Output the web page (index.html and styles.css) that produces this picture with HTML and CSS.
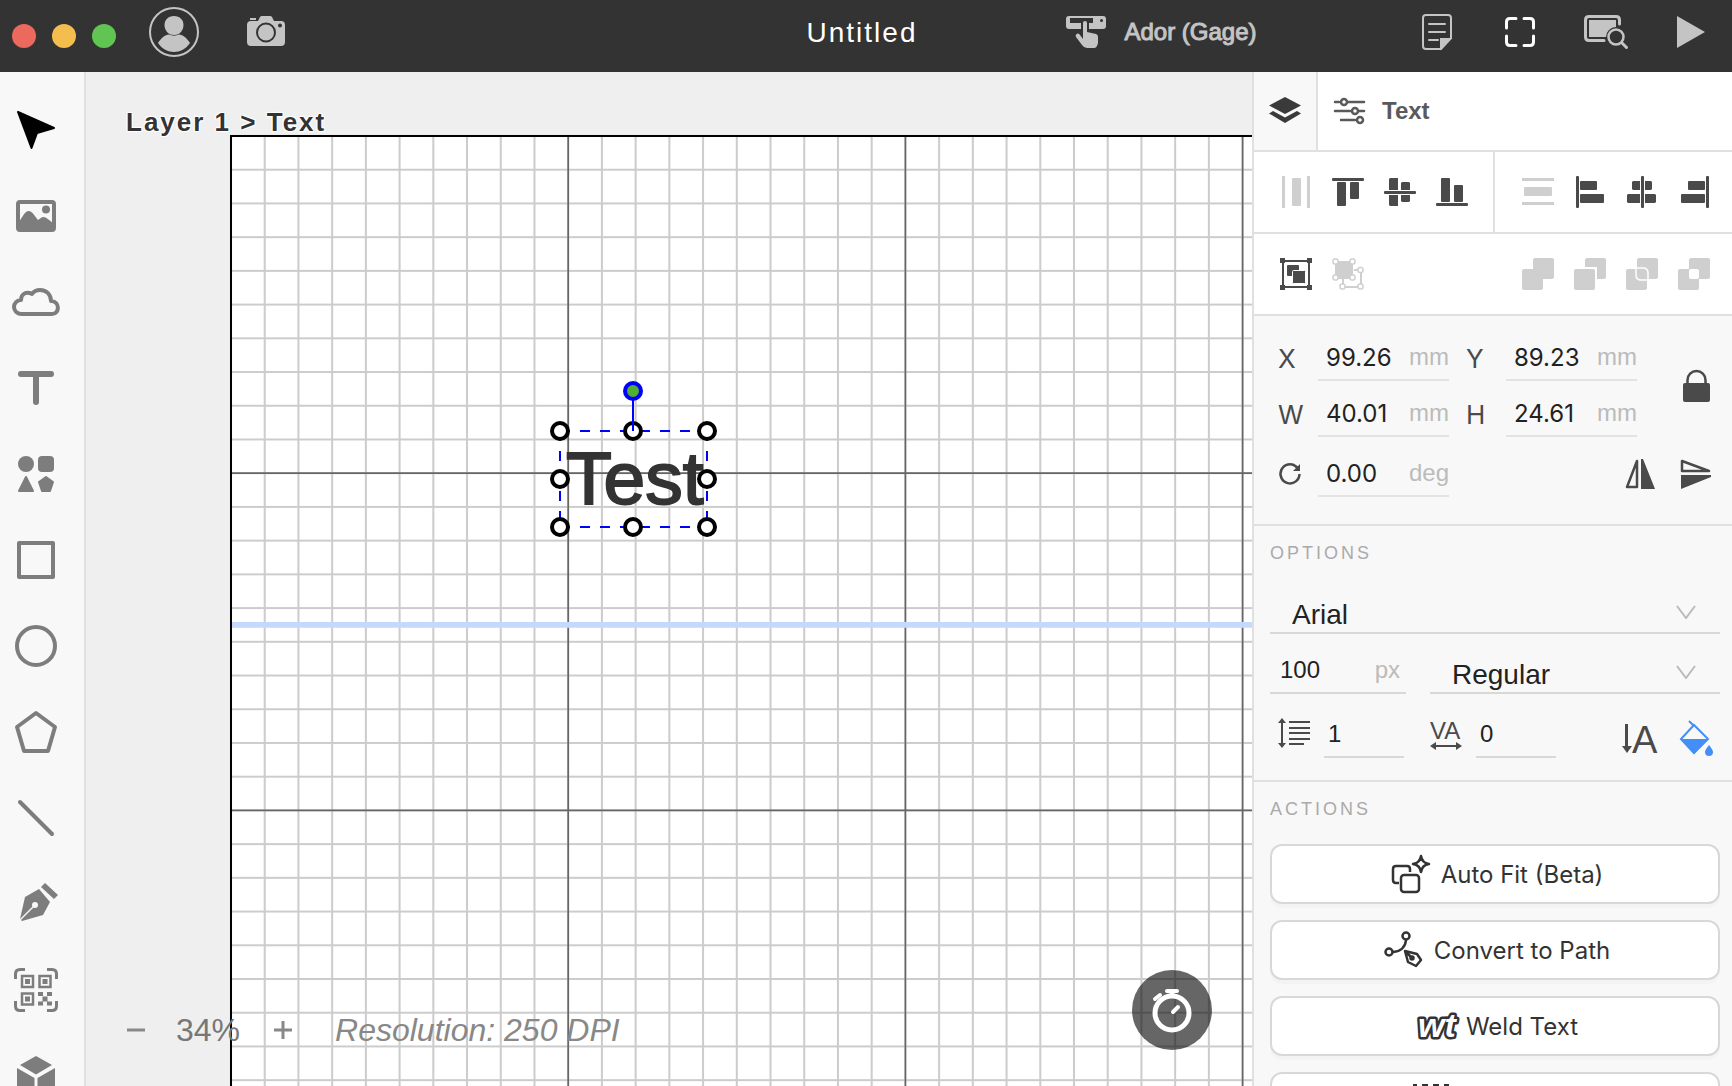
FILE: index.html
```html
<!DOCTYPE html>
<html lang="en">
<head>
    <meta charset="UTF-8">
    <meta name="viewport" content="width=device-width, initial-scale=1.0">
    <title>Untitled</title>
    <link rel="stylesheet" href="styles.css">
</head>
<body>
    <header class="topbar">
        <div class="topbar-left">
            <div class="window-buttons">
                <button class="dot red" aria-label="Close"></button>
                <button class="dot yellow" aria-label="Minimize"></button>
                <button class="dot green" aria-label="Zoom"></button>
            </div>
            <button class="account" aria-label="Account">
                <svg width="50" height="50" viewBox="0 0 50 50" fill="#c4c4c4">
                    <circle cx="25" cy="25" r="24" fill="none" stroke="#c4c4c4" stroke-width="2"/>
                    <path d="M25 9c6 0 9.500 4 9.500 9S31 28 25 28s-9.500-5-9.500-10S19 9 25 9z"/>
                    <path d="M9 36c3-5 7-8 11-8.500 3 1.500 7 1.500 10 0 4 .5 8 3.500 11 8.500-4 6-10 9-16 9S13 42 9 36z"/>
                </svg>
            </button>
            <button aria-label="Camera">
                <svg width="40" height="32" viewBox="0 0 40 32">
                    <path fill="#c4c4c4" d="M4 2h6v2H4zM1 9q0-4 4-4h7l2-4q.6-1 2-1h8q1.400 0 2 1l2 4h7q4 0 4 4v17q0 4-4 4H5q-4 0-4-4z"/>
                    <circle cx="20" cy="16.500" r="9" fill="none" stroke="#333" stroke-width="2"/>
                    <circle cx="34" cy="9.500" r="2" fill="#333"/>
                </svg>
            </button>
        </div>
        <h1 class="title">Untitled</h1>
        <div class="topbar-right">
            <button class="machine">
                <svg width="42" height="34" viewBox="0 0 42 34">
                    <path fill="#c4c4c4" d="M4 1h34q3 0 3 3v7q0 3-3 3H4q-3 0-3-3V4q0-3 3-3z"/>
                    <path fill="#333" d="M5 3h23v5H5zM16 7h8v8h-8z"/>
                    <circle cx="36.500" cy="5.500" r="1.500" fill="#333"/>
                    <path fill="#c4c4c4" d="M18 8q0-2 2-2t2 2v9l9 2q2 .6 2 3v6q-1 5-4 5h-7q-3 0-5-3l-6-8q-1-2 .6-3t3 .6L18 24z"/>
                </svg>
                <span>Ador (Gage)</span>
            </button>
            <nav class="topbar-tools">
                <button aria-label="Notes">
                    <svg width="30" height="36" viewBox="0 0 30 36" fill="none" stroke="#c4c4c4" stroke-width="2" stroke-linecap="round">
                        <path d="M4 1h22q3 0 3 3v20L19 35H4q-3 0-3-3V4q0-3 3-3zM7 10h16M7 18h16M7 26h9"/>
                        <path fill="#c4c4c4" d="M19 34v-9h9z"/>
                    </svg>
                </button>
                <button aria-label="Frame">
                    <svg width="30" height="30" viewBox="0 0 30 30" fill="none" stroke="#fff" stroke-width="3" stroke-linecap="round">
                        <path d="M1.500 11V5q0-3.500 3.500-3.500h6M19 1.500h6q3.500 0 3.500 3.500v6M28.500 19v6q0 3.500-3.500 3.500h-6M11 28.500H5q-3.500 0-3.500-3.500v-6"/>
                    </svg>
                </button>
                <button aria-label="Preview">
                    <svg width="44" height="34" viewBox="0 0 44 34" fill="none">
                        <path fill="#c4c4c4" d="M5 5h27v9q-9 0-9 8H5z"/>
                        <path stroke="#c4c4c4" stroke-width="3" stroke-linecap="round" d="M35.500 9V5q0-3.500-3.500-3.500H5Q1.500 1.500 1.500 5v17q0 3.500 3.500 3.500h15"/>
                        <circle cx="32" cy="22" r="10" fill="#333"/>
                        <circle cx="32" cy="22" r="7.500" stroke="#c4c4c4" stroke-width="2.500"/>
                        <path stroke="#c4c4c4" stroke-width="3" stroke-linecap="round" d="M38 28l4.500 4.500"/>
                    </svg>
                </button>
                <button aria-label="Start">
                    <svg width="28" height="32" viewBox="0 0 28 32"><path fill="#c4c4c4" d="M0 0l28 16L0 32z"/></svg>
                </button>
            </nav>
        </div>
    </header>

    <main class="editor">
        <nav class="toolbar">
            <button aria-label="Select">
                <svg viewBox="0 0 48 48"><path fill="#000" stroke="#000" stroke-width="2" stroke-linejoin="round" d="M6 6l36 16-17 5-5.500 15z"/></svg>
            </button>
            <button aria-label="Image">
                <svg viewBox="0 0 48 48">
                    <rect class="line" x="6" y="10" width="36" height="28" rx="2"/>
                    <path d="M7 30c4-6 6-11 9.500-11S23 24 26 28c2-1 3-3 5.500-3S37 28 41 31v7H7z"/>
                    <circle cx="34" cy="17.500" r="4"/>
                </svg>
            </button>
            <button aria-label="My cloud">
                <svg viewBox="0 0 48 48"><path class="line" d="M9 36a7 7 0 0 1 0-14c0-6 5-9 11-6 2-3 5-4 8-4 7 0 11 5 11 11 9 0 9 13 1 13z"/></svg>
            </button>
            <button aria-label="Text">
                <svg viewBox="0 0 48 48"><path class="line thick" d="M9 10h30M24 10v28"/></svg>
            </button>
            <button aria-label="Shapes">
                <svg viewBox="0 0 48 48">
                    <circle cx="14" cy="14" r="8"/>
                    <rect x="26" y="6" width="16" height="16" rx="4"/>
                    <path stroke="#7d7d7d" stroke-width="2" stroke-linejoin="round" d="M14 27l7 14H7zM34 27l7 5-3 9h-8l-3-9z"/>
                </svg>
            </button>
            <button aria-label="Rectangle">
                <svg viewBox="0 0 48 48"><rect class="line" x="7" y="7" width="34" height="34"/></svg>
            </button>
            <button aria-label="Ellipse">
                <svg viewBox="0 0 48 48"><circle class="line" cx="24" cy="24" r="19"/></svg>
            </button>
            <button aria-label="Polygon">
                <svg viewBox="0 0 48 48"><path class="line" d="M24 5l19 14-7 24H12L5 19z"/></svg>
            </button>
            <button aria-label="Line">
                <svg viewBox="0 0 48 48"><path class="line" d="M8 8l32 32"/></svg>
            </button>
            <button aria-label="Pen">
                <svg viewBox="0 0 48 48">
                    <path d="M33 3l13 12-4 4L29 7zM27 9l11 13-7 13-21 6-2-2 5-22z"/>
                    <circle cx="23" cy="25" r="3" fill="#f8f8f8"/>
                    <path stroke="#f8f8f8" stroke-width="1.500" d="M8 40l15-15"/>
                </svg>
            </button>
            <button aria-label="Code">
                <svg viewBox="0 0 48 48">
                    <path fill="none" stroke="#7d7d7d" stroke-width="3" d="M3.500 13V8q0-4.500 4.500-4.500h5M35 3.500h5q4.500 0 4.500 4.500v5M44.500 35v5q0 4.500-4.500 4.500h-5M13 44.500H8Q3.500 44.500 3.500 40v-5"/>
                    <path fill="none" stroke="#7d7d7d" stroke-width="2.500" d="M10 10h11v11H10zM27.500 10h11v11h-11zM10 27.500h11v11H10z"/>
                    <path d="M13 13h5v5h-5zM30.500 13h5v5h-5zM13 30.500h5v5h-5zM26 26h5v4h-5zM35 26h5v4h-5zM30.500 30.500h5v5h-5zM26 35.500h5v4h-5zM35 35.500h5v4h-5z"/>
                </svg>
            </button>
            <button aria-label="3D">
                <svg viewBox="0 0 48 48"><path d="M24 4l16 9-16 9.500L8 13zM5 16l17.500 10v19L5 35zM43 16L25.500 26v19L43 35z"/></svg>
            </button>
        </nav>

        <section class="workspace">
            <svg class="work-area" width="100%" height="100%">
                <defs>
                    <pattern id="minorGrid" width="100" height="100" patternUnits="userSpaceOnUse">
                        <path d="M0 0V100M100 0V100M0 0H100M0 100H100" fill="none" stroke="#000" stroke-opacity=".2" stroke-width="6"/>
                    </pattern>
                </defs>
                <!-- 1 unit = 0.1 mm -->
                <g transform="translate(145 64) scale(.3372)">
                    <rect width="4300" height="3200" fill="#fff"/>
                    <rect width="4300" height="3200" fill="url(#minorGrid)"/>
                    <path d="M1000 0V3200M2000 0V3200M3000 0V3200M0 1000H4300M0 2000H4300" fill="none" stroke="#000" stroke-opacity=".5" stroke-width="5"/>
                    <rect width="4300" height="3200" fill="none" stroke="#000" stroke-width="6"/>
                    <path d="M3 1450H4300" stroke="#c4d9fb" stroke-width="17"/>
                </g>
                <text class="canvas-text" x="480" y="432">Test</text>
                <g class="selection">
                    <path class="dashed" d="M474 359H621M474 455H621M474 359V455M621 359V455"/>
                    <g class="grips">
                        <circle cx="474" cy="359" r="8"/>
                        <circle cx="547" cy="359" r="8"/>
                        <circle cx="621" cy="359" r="8"/>
                        <circle cx="474" cy="407" r="8"/>
                        <circle cx="621" cy="407" r="8"/>
                        <circle cx="474" cy="455" r="8"/>
                        <circle cx="547" cy="455" r="8"/>
                        <circle cx="621" cy="455" r="8"/>
                    </g>
                    <path d="M547 327V359"/>
                    <circle class="rotate-grip" cx="547" cy="319" r="8"/>
                </g>
            </svg>

            <div class="path-label">Layer 1 &gt; Text</div>

            <div class="zoom-bar">
                <button aria-label="Zoom out"><svg width="20" height="20" viewBox="0 0 20 20"><path d="M1 10h18"/></svg></button>
                <span class="zoom-ratio">34%</span>
                <button aria-label="Zoom in"><svg width="20" height="20" viewBox="0 0 20 20"><path d="M1 10h18M10 1v18"/></svg></button>
                <span class="resolution">Resolution: 250 DPI</span>
            </div>

            <button class="timer" aria-label="Estimate time">
                <svg width="44" height="48" viewBox="0 0 44 48" fill="none" stroke="#fff" stroke-width="5">
                    <circle cx="22" cy="27" r="17"/>
                    <path stroke-width="4" stroke-linecap="round" d="M17 5h10M5 13l5-4M23 26l5-5"/>
                    <path d="M22 6v5"/>
                </svg>
            </button>
        </section>

        <aside class="panel">
            <div class="tabs">
                <button class="tab layers" aria-label="Layers">
                    <svg width="34" height="28" viewBox="0 0 34 28" fill="#3a3a3a">
                        <path d="M17 0l16 8.500L17 17 1 8.500z"/>
                        <path d="M5 14l12 6.500L29 14l4 2.500L17 26 1 16.500z"/>
                    </svg>
                </button>
                <button class="tab active">
                    <svg width="32" height="26" viewBox="0 0 32 26" fill="none" stroke="#5a5a5a" stroke-width="2.500" stroke-linecap="round">
                        <path d="M1 4h4M14 4h16M1 13h15M25 13h5M7 22h14"/>
                        <circle cx="10" cy="4" r="3"/>
                        <circle cx="21" cy="13" r="3"/>
                        <circle cx="26" cy="22" r="3"/>
                    </svg>
                    Text
                </button>
            </div>

            <div class="align-row">
                <div class="icon-group start">
                    <button disabled aria-label="Distribute horizontally"><svg viewBox="0 0 32 32"><path d="M2 0h3v32H2zM27 0h3v32h-3z"/><rect x="12" y="2" width="9" height="28" rx="1"/></svg></button>
                    <button aria-label="Align top"><svg viewBox="0 0 32 32"><rect y="2" width="32" height="3" rx="1"/><rect x="5" y="6" width="9" height="24" rx="1"/><rect x="18" y="6" width="9" height="17" rx="1"/></svg></button>
                    <button aria-label="Align middle"><svg viewBox="0 0 32 32"><rect y="15" width="32" height="3" rx="1"/><path d="M6 2h8v12H5V3zM5 19h9v11H6l-1-1zM17 7l1-1h7l1 1v7h-9zM17 19h9v6l-1 1h-7l-1-1z"/></svg></button>
                    <button aria-label="Align bottom"><svg viewBox="0 0 32 32"><rect y="27" width="32" height="3" rx="1"/><rect x="5" y="2" width="9" height="24" rx="1"/><rect x="18" y="9" width="9" height="17" rx="1"/></svg></button>
                </div>
                <div class="icon-group end">
                    <button disabled aria-label="Distribute vertically"><svg viewBox="0 0 32 32"><path d="M0 2h32v3H0zM0 26h32v3H0z"/><rect x="2" y="11" width="28" height="9" rx="1"/></svg></button>
                    <button aria-label="Align left"><svg viewBox="0 0 32 32"><rect x="2" width="3" height="32" rx="1"/><rect x="6" y="5" width="17" height="9" rx="1"/><rect x="6" y="18" width="24" height="9" rx="1"/></svg></button>
                    <button aria-label="Align center"><svg viewBox="0 0 32 32"><rect x="15" width="3" height="32" rx="1"/><path d="M7 5h7v9H7l-1-1V6zM19 5h6l1 1v7l-1 1h-6zM2 18h12v9H2l-1-1v-7zM19 18h10l1 1v7l-1 1H19z"/></svg></button>
                    <button aria-label="Align right"><svg viewBox="0 0 32 32"><rect x="28" width="3" height="32" rx="1"/><rect x="10" y="5" width="17" height="9" rx="1"/><rect x="3" y="18" width="24" height="9" rx="1"/></svg></button>
                </div>
            </div>

            <div class="align-row group-row">
                <div class="icon-group start">
                    <button aria-label="Group">
                        <svg viewBox="0 0 32 32">
                            <rect x="3" y="3" width="26" height="26" fill="none" stroke="#4a4a4a" stroke-width="2"/>
                            <path d="M0 0h5v5H0zM27 0h5v5h-5zM0 27h5v5H0zM27 27h5v5h-5z"/>
                            <rect x="7" y="7" width="12" height="11" rx="1"/>
                            <rect x="12.500" y="12.500" width="13" height="13" rx="1" stroke="#fff"/>
                        </svg>
                    </button>
                    <button disabled aria-label="Ungroup">
                        <svg viewBox="0 0 32 32">
                            <path d="M3 3h18v18H3z"/>
                            <path fill="none" stroke="#cfcfcf" stroke-width="2" d="M22 12h7v17H11v-9"/>
                            <g fill="#fff" stroke="#cfcfcf" stroke-width="1.500">
                                <rect x="1" y="1" width="5" height="5" rx="2"/>
                                <rect x="18" y="1" width="5" height="5" rx="2"/>
                                <rect x="1" y="17" width="5" height="5" rx="2"/>
                                <rect x="18" y="17" width="5" height="5" rx="2"/>
                                <rect x="26" y="9.500" width="5" height="5" rx="2"/>
                                <rect x="26" y="26" width="5" height="5" rx="2"/>
                                <rect x="8" y="26" width="5" height="5" rx="2"/>
                            </g>
                        </svg>
                    </button>
                </div>
                <div class="icon-group end">
                    <button disabled aria-label="Union"><svg viewBox="0 0 32 32"><rect x="11" width="21" height="21" rx="2"/><rect y="11" width="21" height="21" rx="2"/></svg></button>
                    <button disabled aria-label="Subtract"><svg viewBox="0 0 32 32"><rect x="11" width="21" height="21" rx="2"/><path fill="#fff" d="M0 9h23v23H0z"/><rect y="11" width="21" height="21" rx="2"/></svg></button>
                    <button disabled aria-label="Intersect"><svg viewBox="0 0 32 32"><rect x="11" width="21" height="21" rx="2"/><rect y="11" width="21" height="21" rx="2"/><path fill="none" stroke="#fff" stroke-width="1.500" d="M10 10h7q5 0 5 5v7h-7q-5 0-5-5z"/></svg></button>
                    <button disabled aria-label="Exclude"><svg viewBox="0 0 32 32"><rect x="11" width="21" height="21" rx="2"/><rect y="11" width="21" height="21" rx="2"/><rect x="11" y="11" width="10" height="10" rx="2" fill="#fff"/></svg></button>
                </div>
            </div>

            <div class="section dimensions">
                <label for="x">X</label>
                <div class="field"><input type="text" id="x" value="99.26"><span class="unit">mm</span></div>
                <label class="second" for="y">Y</label>
                <div class="field"><input type="text" id="y" value="89.23"><span class="unit">mm</span></div>
                <button class="lock" aria-label="Lock ratio">
                    <svg width="32" height="34" viewBox="0 0 32 34">
                        <rect x="3" y="14" width="27" height="19" rx="2" fill="#4a4a4a"/>
                        <path fill="none" stroke="#4a4a4a" stroke-width="2.500" d="M7.500 15v-4a9 9 0 0 1 18 0v4"/>
                    </svg>
                </button>
                <label for="w">W</label>
                <div class="field"><input type="text" id="w" value="40.01"><span class="unit">mm</span></div>
                <label class="second" for="h">H</label>
                <div class="field"><input type="text" id="h" value="24.61"><span class="unit">mm</span></div>
                <label for="angle" aria-label="Rotation">
                    <svg width="24" height="24" viewBox="0 0 24 24" fill="none" stroke="#4a4a4a" stroke-width="2.500">
                        <path d="M21.500 12a9.500 9.500 0 1 1-3.500-7.500l3 3"/>
                        <path fill="#4a4a4a" stroke="none" d="M22 2v7h-7z"/>
                    </svg>
                </label>
                <div class="field"><input type="text" id="angle" value="0.00"><span class="unit">deg</span></div>
                <div class="flips">
                    <button aria-label="Flip horizontal">
                        <svg width="32" height="32" viewBox="0 0 32 32"><path fill="none" stroke="#4a4a4a" stroke-width="2.500" stroke-linejoin="round" d="M13 3v26H3z"/><path fill="#4a4a4a" d="M17 1h2l12 30H17z"/></svg>
                    </button>
                    <button aria-label="Flip vertical">
                        <svg width="32" height="32" viewBox="0 0 32 32"><path fill="none" stroke="#4a4a4a" stroke-width="2.500" stroke-linejoin="round" d="M2 3v10h27z"/><path fill="#4a4a4a" d="M1 17h30v2L1 31z"/></svg>
                    </button>
                </div>
            </div>

            <div class="section">
                <h2>Options</h2>
                <div class="option-rows">
                    <select aria-label="Font family">
                        <option>Arial</option>
                    </select>
                    <div class="option-row">
                        <div class="field size"><input type="text" aria-label="Font size" value="100"><span class="unit">px</span></div>
                        <select aria-label="Font style">
                            <option>Regular</option>
                        </select>
                    </div>
                    <div class="option-row spacing">
                        <label for="lineSpacing" aria-label="Line spacing">
                            <svg width="32" height="32" viewBox="0 0 32 32" fill="none" stroke="#4a4a4a" stroke-width="2">
                                <path d="M4 5v22M11 5h21M11 11h21M11 16h21M11 22h21M11 27h15"/>
                                <path fill="#4a4a4a" stroke="none" d="M4 1l4 5H0zM4 31l4-5H0z"/>
                            </svg>
                        </label>
                        <div class="field"><input type="text" id="lineSpacing" value="1"></div>
                        <label class="tracking" for="letterSpacing" aria-label="Letter spacing">
                            <svg width="32" height="40" viewBox="0 0 32 40">
                                <text x="0" y="26" font-size="24" fill="#4a4a4a">VA</text>
                                <path fill="#4a4a4a" d="M0 33l6-4v3h20v-3l6 4-6 4v-3H6v3z"/>
                            </svg>
                        </label>
                        <div class="field"><input type="text" id="letterSpacing" value="0"></div>
                        <div class="text-tools">
                            <button aria-label="Vertical text">
                                <svg width="38" height="50" viewBox="0 0 38 50">
                                    <path fill="#4a4a4a" d="M4 11h3v22h4l-5 7-5-7h3z"/>
                                    <text x="11" y="40" font-size="38" fill="#4a4a4a">A</text>
                                </svg>
                            </button>
                            <button aria-label="Fill">
                                <svg width="34" height="36" viewBox="0 0 34 36">
                                    <path fill="none" stroke="#448ff7" stroke-width="2" d="M10 1l5 5M15 5l14 14-14 14L2 19z"/>
                                    <path fill="#448ff7" d="M1 19h28L15 34zM30 25q4 5 4 7 0 4-4 4t-4-4q0-2 4-7z"/>
                                </svg>
                            </button>
                        </div>
                    </div>
                </div>
            </div>

            <div class="section actions">
                <h2>Actions</h2>
                <div class="action-list">
                    <button class="action">
                        <svg width="40" height="40" viewBox="0 0 40 40" fill="none" stroke="#333" stroke-width="2.500" stroke-linejoin="round">
                            <path d="M8 29H5q-3 0-3-3V15q0-3 3-3h11q3 0 3 3v3"/>
                            <rect x="10" y="21" width="18" height="17" rx="3"/>
                            <path d="M30 2q1 7 8 8-7 1-8 8-1-7-8-8 7-1 8-8z"/>
                        </svg>
                        Auto Fit (Beta)
                    </button>
                    <button class="action">
                        <svg width="40" height="40" viewBox="0 0 40 40" fill="none" stroke="#333" stroke-width="2.500" stroke-linejoin="round">
                            <circle cx="22" cy="6" r="3.500"/>
                            <circle cx="5" cy="22" r="3.500"/>
                            <path d="M22 10q-1 11-13 12M21 21l3 11 8 4 5-6-4-6zM21 21l7 7"/>
                            <circle cx="28" cy="28" r="1.500" fill="#333"/>
                        </svg>
                        Convert to Path
                    </button>
                    <button class="action">
                        <svg class="weld" width="40" height="40" viewBox="0 0 40 40">
                            <text x="2" y="31">wt</text>
                        </svg>
                        Weld Text
                    </button>
                    <button class="action" aria-label="More">
                        <svg width="170" height="40" viewBox="0 0 170 40" fill="none" stroke="#333" stroke-width="2">
                            <path stroke-dasharray="6 5" d="M2 6V3h34v34H2V6"/>
                        </svg>
                    </button>
                </div>
            </div>
        </aside>
    </main>
</body>
</html>
```
FILE: styles.css
```css
* {
    box-sizing: border-box;
}

body {
    margin: 0;
    height: 100vh;
    display: flex;
    flex-direction: column;
    overflow: hidden;
    font-family: "Liberation Sans", Arial, sans-serif;
    font-size: 24px;
    color: #333;
    background-color: #efefef;
}

button {
    display: flex;
    align-items: center;
    justify-content: center;
    padding: 0;
    border: none;
    background: none;
    font: inherit;
    color: inherit;
    cursor: pointer;
}

svg {
    display: block;
    flex-shrink: 0;
    overflow: visible;
}

/* Top bar */
.topbar {
    display: grid;
    grid-template-columns: 1fr auto 1fr;
    align-items: start;
    height: 72px;
    padding: 7px 20px 0 12px;
    background-color: #333;
    flex-shrink: 0;
}

.topbar-left,
.topbar-right,
.topbar-tools,
.window-buttons {
    display: flex;
    align-items: center;
}

.window-buttons {
    gap: 16px;
    padding-top: 8px;
}

.dot {
    width: 24px;
    height: 24px;
    border-radius: 50%;
}

.red {
    background-color: #ec695e;
}

.yellow {
    background-color: #f4be4f;
}

.green {
    background-color: #61c554;
}

.account {
    margin: 0 47px 0 33px;
}

.title {
    margin: 0;
    font-size: 28px;
    font-weight: normal;
    line-height: 52px;
    letter-spacing: 2px;
    color: #fff;
}

.topbar-right {
    height: 50px;
    padding-left: 148px;
    justify-content: space-between;
}

.machine {
    gap: 17px;
    color: #c4c4c4;
    -webkit-text-stroke: 1px #c4c4c4;
    white-space: nowrap;
}

.topbar-tools {
    gap: 49px;
    padding-right: 7px;
}

.topbar-tools button:first-child {
    margin-right: 4px;
}

/* Editor */
.editor {
    display: flex;
    flex: 1;
    min-height: 0;
}

.toolbar {
    width: 86px;
    flex-shrink: 0;
    padding-top: 15px;
    border-right: 2px solid #e0e0e0;
    background-color: #f8f8f8;
    overflow: hidden;
}

.toolbar button {
    width: 72px;
    height: 86px;
}

.toolbar svg {
    width: 48px;
    height: 48px;
    fill: #7d7d7d;
}

.toolbar .line {
    fill: none;
    stroke: #7d7d7d;
    stroke-width: 4;
    stroke-linecap: round;
    stroke-linejoin: round;
}

.toolbar .thick {
    stroke-width: 6;
}

.workspace {
    position: relative;
    flex: 1;
    min-width: 0;
    overflow: hidden;
}

.canvas-text {
    font-size: 75px;
    fill: #333;
    stroke: #333;
    stroke-width: 2;
}

.selection {
    fill: none;
    stroke: #00f;
    stroke-width: 2;
}

.dashed {
    stroke-dasharray: 10 10;
}

.grips {
    fill: #fff;
    stroke: #000;
    stroke-width: 4;
}

.rotate-grip {
    fill: #50b030;
    stroke-width: 4;
}

.path-label {
    position: absolute;
    top: 34px;
    left: 40px;
    font-size: 26px;
    font-weight: bold;
    line-height: 32px;
    letter-spacing: 2px;
    text-shadow: 0 0 2px #fff, 1px 1px 1px #fff, -1px -1px 1px #fff, 1px -1px 1px #fff, -1px 1px 1px #fff;
}

.zoom-bar {
    position: absolute;
    left: 40px;
    bottom: 36px;
    display: flex;
    align-items: center;
    font-size: 32px;
    line-height: 40px;
    color: #888;
}

.zoom-bar svg {
    stroke: #888;
    stroke-width: 3;
}

.zoom-ratio {
    margin: 0 33px 0 30px;
    color: #777;
}

.resolution {
    margin-left: 42px;
    font-style: italic;
}

.timer {
    position: absolute;
    right: 40px;
    bottom: 36px;
    width: 80px;
    height: 80px;
    border-radius: 50%;
    background-color: rgba(0, 0, 0, 0.6);
}

/* Right panel */
.panel {
    position: relative;
    width: 480px;
    flex-shrink: 0;
    border-left: 2px solid #e0e0e0;
    background-color: #f8f8f8;
    overflow: hidden;
}

.tabs {
    display: flex;
    height: 80px;
    border-bottom: 2px solid #e0e0e0;
}

.tab.layers {
    width: 64px;
    border-right: 2px solid #e0e0e0;
}

.tab.active {
    flex: 1;
    justify-content: flex-start;
    gap: 16px;
    padding-left: 16px;
    background-color: #fff;
    font-weight: bold;
    color: #5a5a5a;
}

.align-row {
    display: grid;
    grid-template-columns: 1fr 1fr;
    height: 82px;
    padding-left: 4px;
    border-bottom: 2px solid #e0e0e0;
    background-color: #fff;
}

.icon-group {
    display: flex;
    align-items: center;
    gap: 20px;
}

.icon-group.start {
    padding-left: 22px;
    border-right: 2px solid #e0e0e0;
}

.icon-group.end {
    justify-content: flex-end;
    padding-right: 22px;
}

.group-row .start {
    border-right-color: transparent;
}

.icon-group svg {
    width: 32px;
    height: 32px;
    fill: #4a4a4a;
}

.icon-group button:disabled svg {
    fill: #cfcfcf;
}

.section {
    padding: 16px 12px 22px 16px;
    border-bottom: 2px solid #e0e0e0;
}

.section h2 {
    margin: 0 0 24px;
    font-size: 18px;
    font-weight: normal;
    line-height: 22px;
    letter-spacing: 3px;
    text-transform: uppercase;
    color: #aaa;
}

.dimensions {
    display: grid;
    grid-template-columns: 40px 131px 57px 131px 1fr;
    grid-template-rows: 46px 46px 50px;
    row-gap: 10px;
    align-items: end;
    padding: 19px 20px 27px 24px;
}

.dimensions label {
    display: flex;
    align-items: center;
    height: 46px;
    font-family: Inter, sans-serif;
    font-size: 26px;
    color: #4a4a4a;
}

.dimensions .second {
    padding-left: 17px;
}

.field {
    display: flex;
    align-items: center;
    height: 46px;
    border-bottom: 2px solid #e3e3e3;
}

.field input {
    flex: 1;
    width: 100%;
    min-width: 0;
    padding: 0 0 0 8px;
    border: none;
    outline: none;
    background: none;
    font-family: Inter, sans-serif;
    font-size: 24px;
    color: #222;
}

.unit {
    color: #bbb;
}

.lock {
    grid-column: 5;
    grid-row: 1 / 3;
    align-self: center;
    justify-self: end;
}

.flips {
    grid-column: 3 / 6;
    display: flex;
    align-items: center;
    justify-content: flex-end;
    gap: 24px;
    height: 46px;
}

.option-rows {
    display: flex;
    flex-direction: column;
    gap: 14px;
}

.option-row {
    display: flex;
    gap: 24px;
}

.option-row select {
    flex: 1;
}

select {
    height: 46px;
    padding: 8px 0 0 22px;
    border: none;
    border-bottom: 2px solid #d8d8d8;
    border-radius: 0;
    outline: none;
    appearance: none;
    font-family: "Liberation Sans", Arial, sans-serif;
    font-size: 28px;
    color: #222;
    background: url("data:image/svg+xml,%3Csvg xmlns='http://www.w3.org/2000/svg' width='20' height='14' fill='none' stroke='%23bbb' stroke-width='2'%3E%3Cpath d='M1 1l9 12 9-12'/%3E%3C/svg%3E") no-repeat right 24px top 17px;
}

.field.size {
    width: 136px;
    padding-right: 6px;
}

.size input,
.spacing input {
    padding-left: 10px;
    font-family: "Liberation Sans", Arial, sans-serif;
}

.section .size,
.spacing .field {
    border-color: #d8d8d8;
}

.spacing {
    align-items: center;
    gap: 14px;
    padding-left: 8px;
}

.spacing .field {
    width: 80px;
    height: 50px;
}

.spacing input {
    padding: 4px 0 0 4px;
}

.tracking {
    margin-left: 12px;
}

.text-tools {
    display: flex;
    align-items: center;
    gap: 20px;
    height: 50px;
    margin-left: auto;
    padding: 10px 7px 0 0;
}

.actions {
    border-bottom: none;
}

.action-list {
    display: flex;
    flex-direction: column;
    gap: 16px;
}

.action {
    gap: 10px;
    height: 60px;
    padding-left: 4px;
    border: 2px solid #d8d8d8;
    border-radius: 12px;
    background-color: #fff;
    box-shadow: 0 4px 0 rgba(0, 0, 0, 0.02);
    font-family: Inter, sans-serif;
    font-size: 24px;
}

.weld text {
    font-family: "Liberation Sans", Arial, sans-serif;
    font-size: 34px;
    font-weight: bold;
    font-style: italic;
    fill: #fff;
    stroke: #333;
    stroke-width: 5;
    stroke-linejoin: round;
    paint-order: stroke;
}
```
